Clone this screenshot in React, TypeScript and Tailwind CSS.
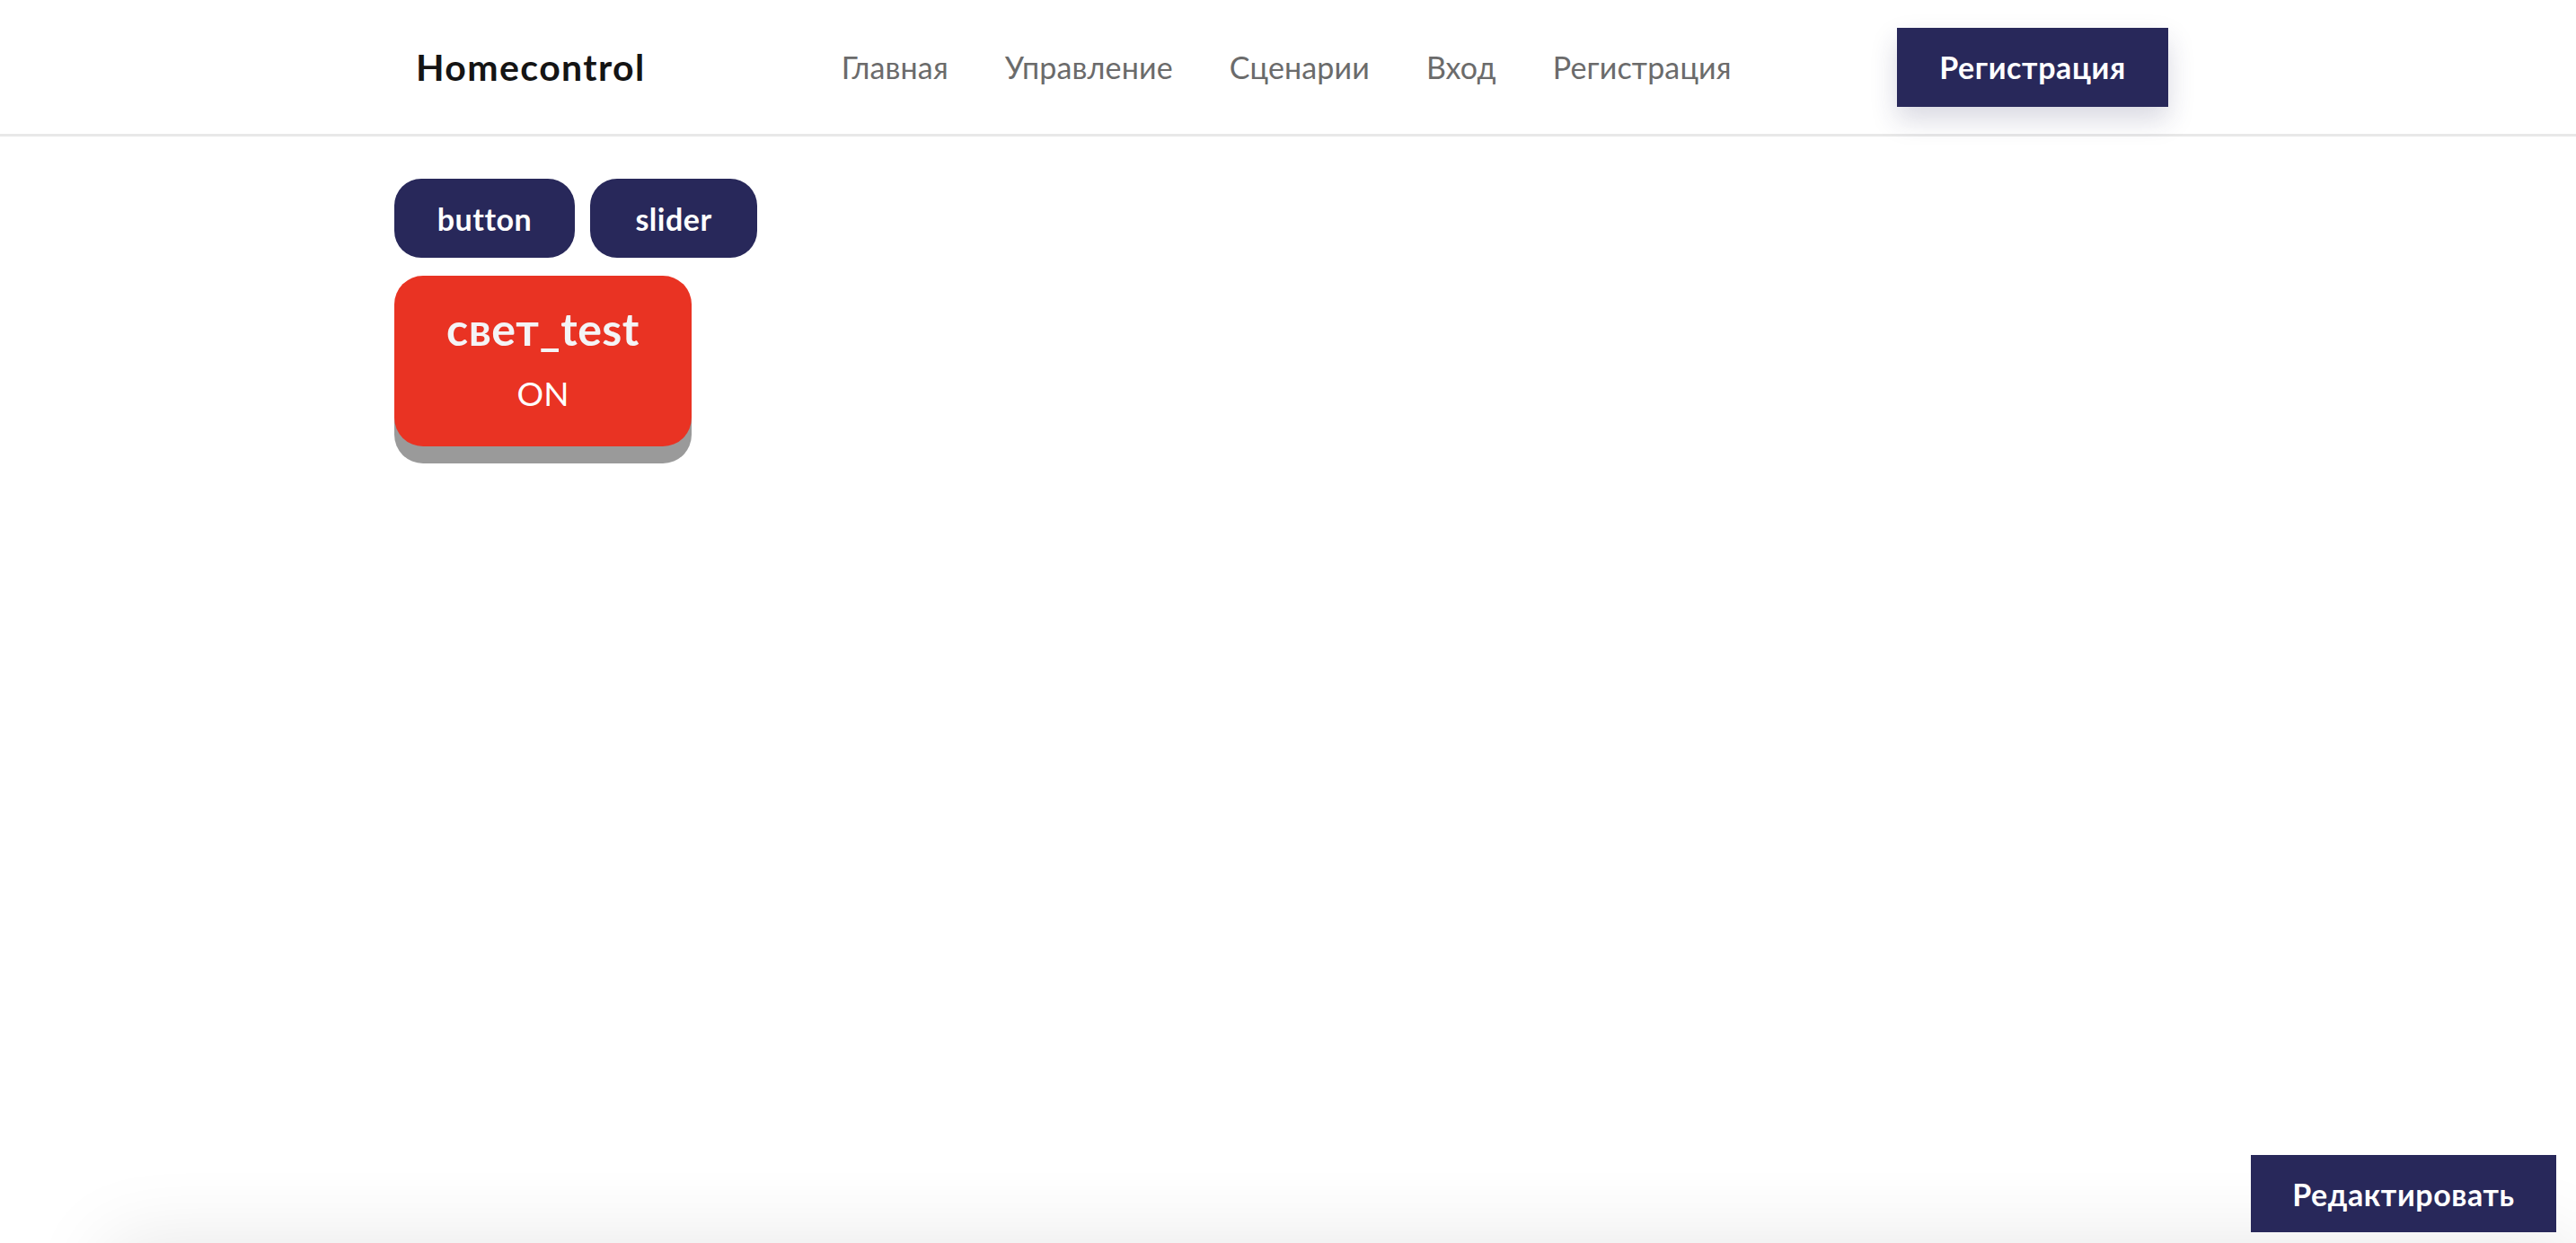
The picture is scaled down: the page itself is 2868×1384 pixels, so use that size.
import React from 'react';

const navItems = ['Главная', 'Управление', 'Сценарии', 'Вход', 'Регистрация'];

const devices = [{ name: 'свет_test', state: 'ON' }];

export default function App() {
  return (
    <div className="bg-white text-[#111] font-['Lato','Noto_Sans',sans-serif]">
      <div className="min-h-screen">
        {/* header */}
        <header className="h-[152px] border-b-[3px] border-[#e8e8e8]">
          <div className="w-[1990px] mx-auto h-full flex items-center">
            <div className="pl-6 text-[41px] font-bold tracking-[1.4px] text-[#141414]">Homecontrol</div>
            <nav className="ml-[218px] flex items-center gap-[63px] text-[34px] tracking-[0.15px] text-[#6b6b6b]">
              {navItems.map((item) => (
                <a key={item} href="#" className="hover:text-black">
                  {item}
                </a>
              ))}
            </nav>
            <button className="ml-auto mr-[15px] w-[302px] h-[88px] bg-[#28285a] text-white text-[34px] font-bold tracking-[0.6px] shadow-[0_14px_30px_rgba(40,40,90,0.18)]">
              Регистрация
            </button>
          </div>
        </header>

        <main className="w-[1990px] mx-auto pt-[47px]">
          <div className="flex gap-[17px]">
            <button className="w-[201px] h-[88px] rounded-[30px] bg-[#28285a] text-white text-[34px] font-bold tracking-[0.5px]">
              button
            </button>
            <button className="w-[186px] h-[88px] rounded-[30px] bg-[#28285a] text-white text-[34px] font-bold tracking-[0.5px]">
              slider
            </button>
          </div>

          <div className="mt-[20px] flex gap-6">
            {devices.map((d) => (
              <div
                key={d.name}
                className="w-[331px] h-[190px] rounded-[32px] bg-[#e93323] shadow-[0_19px_0_#9a9a9a] flex flex-col items-center pt-[34px]"
              >
                <div className="text-[50px] font-bold tracking-[0.5px] text-[#f4f4f6] leading-none">{d.name}</div>
                <div className="mt-[28px] text-[37px] text-white leading-none">{d.state}</div>
              </div>
            ))}
          </div>
        </main>
      </div>

      <div className="fixed left-[120px] right-0 top-full h-[200px] bg-white shadow-[0_0_90px_rgba(0,0,0,0.10)]" />

      <button className="fixed right-[22px] bottom-[12px] w-[340px] h-[86px] bg-[#28285a] text-white text-[34px] font-bold tracking-[0.6px]">
        Редактировать
      </button>
    </div>
  );
}
